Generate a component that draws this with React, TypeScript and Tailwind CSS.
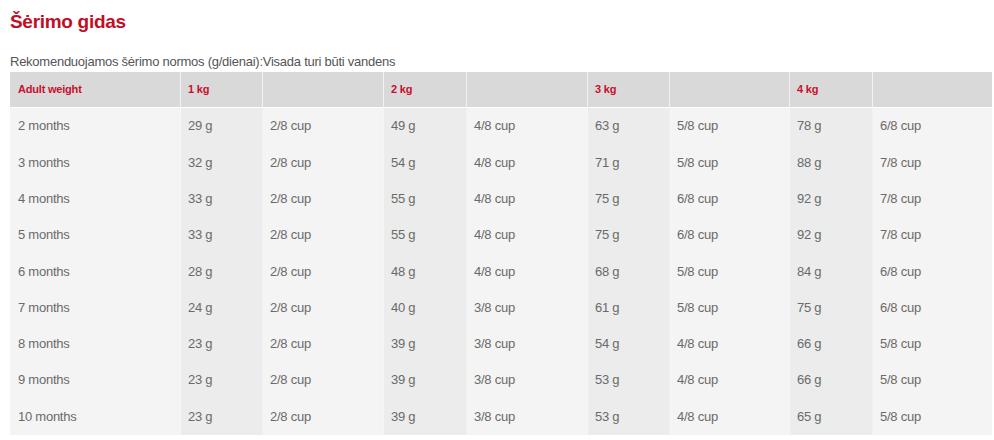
import React from "react";

const rows: [string, string, string, string, string, string, string, string, string][] = [
  ["2 months", "29 g", "2/8 cup", "49 g", "4/8 cup", "63 g", "5/8 cup", "78 g", "6/8 cup"],
  ["3 months", "32 g", "2/8 cup", "54 g", "4/8 cup", "71 g", "5/8 cup", "88 g", "7/8 cup"],
  ["4 months", "33 g", "2/8 cup", "55 g", "4/8 cup", "75 g", "6/8 cup", "92 g", "7/8 cup"],
  ["5 months", "33 g", "2/8 cup", "55 g", "4/8 cup", "75 g", "6/8 cup", "92 g", "7/8 cup"],
  ["6 months", "28 g", "2/8 cup", "48 g", "4/8 cup", "68 g", "5/8 cup", "84 g", "6/8 cup"],
  ["7 months", "24 g", "2/8 cup", "40 g", "3/8 cup", "61 g", "5/8 cup", "75 g", "6/8 cup"],
  ["8 months", "23 g", "2/8 cup", "39 g", "3/8 cup", "54 g", "4/8 cup", "66 g", "5/8 cup"],
  ["9 months", "23 g", "2/8 cup", "39 g", "3/8 cup", "53 g", "4/8 cup", "66 g", "5/8 cup"],
  ["10 months", "23 g", "2/8 cup", "39 g", "3/8 cup", "53 g", "4/8 cup", "65 g", "5/8 cup"],
];

const header = ["Adult weight", "1 kg", "", "2 kg", "", "3 kg", "", "4 kg", ""];

export default function App() {
  return (
    <div
      className="bg-white w-[994px] h-[440px] px-[10px] pt-[9px]"
      style={{ fontFamily: '"Liberation Sans", Arial, sans-serif' }}
    >
      <h1 className="text-[19px] leading-[26px] font-bold text-[#c20e24] tracking-[-0.3px]">
        Šėrimo gidas
      </h1>
      <p className="mt-[19px] text-[13px] leading-[16px] text-[#555555] tracking-[-0.25px]">
        Rekomenduojamos šėrimo normos (g/dienai):Visada turi būti vandens
      </p>
      <div className="mt-[2px] grid grid-cols-[170px_82px_121px_83px_121px_82px_120px_83px_120px] w-[982px]">
        {header.map((h, i) => (
          <div
            key={"h" + i}
            className={
              "h-[36px] flex items-center bg-[#d9d9d9] border-b border-white text-[11px] font-bold text-[#c8102e] tracking-[-0.2px] " +
              (i > 0 ? "pl-[7px] border-l border-l-[#f2f2f2]" : "pl-[8px]")
            }
          >
            {h}
          </div>
        ))}
        {rows.map((r, ri) =>
          r.map((c, ci) => (
            <div
              key={ri + "-" + ci}
              className={
                "h-[36.3px] flex items-center text-[13px] text-[#6a6a6a] tracking-[-0.25px] " +
                (ci === 0 ? "pl-[8px] " : "pl-[7px] ") +
                (ci % 2 === 1
                  ? "bg-[#ececec] border-l border-l-[#f6f6f6]"
                  : ci === 0
                  ? "bg-[#f4f4f4]"
                  : "bg-[#f4f4f4] border-l border-l-[#f0f0f0]")
              }
            >
              {c}
            </div>
          ))
        )}
      </div>
    </div>
  );
}
